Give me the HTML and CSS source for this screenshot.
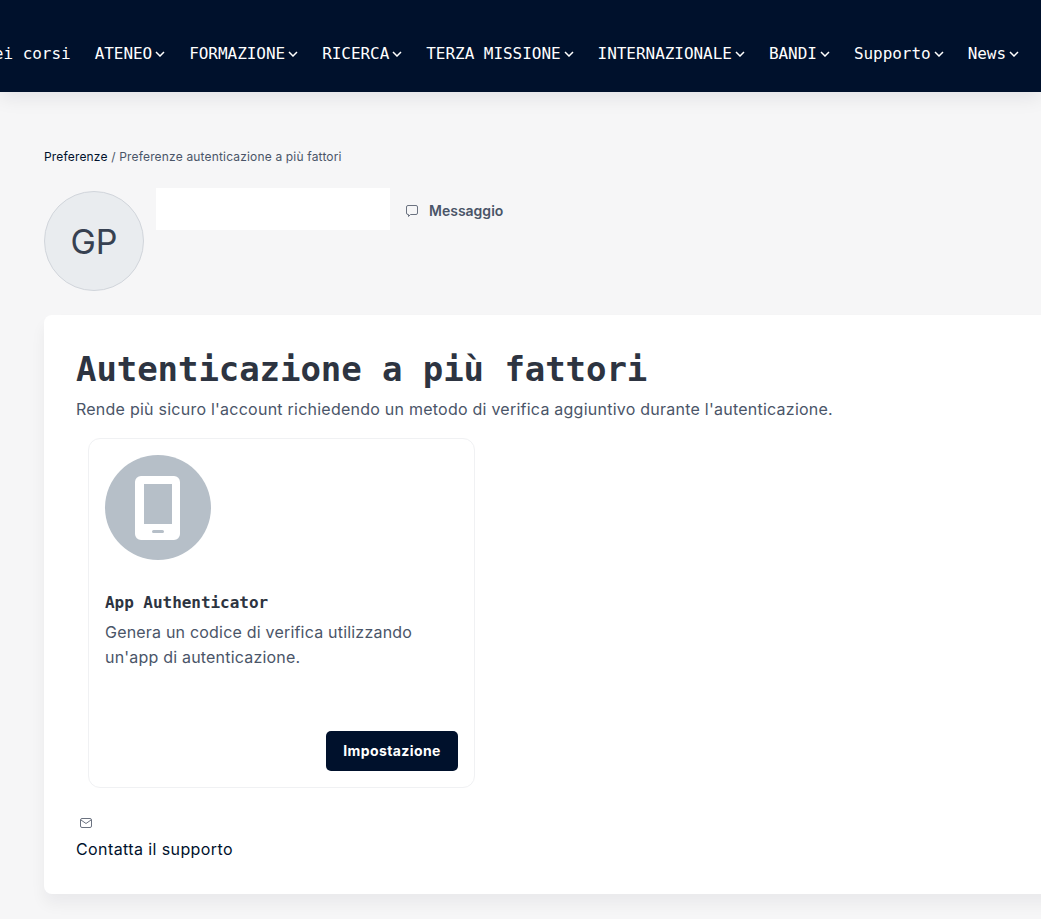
FILE: index.html
```html
<!DOCTYPE html>
<html lang="it">
<head>
  <meta charset="UTF-8" />
  <title>Autenticazione a più fattori</title>
  <link rel="stylesheet" href="styles.css">
</head>
<body>
  <nav class="topbar">
    <a class="nav-link" href="#">I miei corsi</a>
    <a class="nav-link" href="#">ATENEO<svg class="chevron" viewBox="0 0 10 6"><path d="M1 1l4 4 4-4"/></svg></a>
    <a class="nav-link" href="#">FORMAZIONE<svg class="chevron" viewBox="0 0 10 6"><path d="M1 1l4 4 4-4"/></svg></a>
    <a class="nav-link" href="#">RICERCA<svg class="chevron" viewBox="0 0 10 6"><path d="M1 1l4 4 4-4"/></svg></a>
    <a class="nav-link" href="#">TERZA MISSIONE<svg class="chevron" viewBox="0 0 10 6"><path d="M1 1l4 4 4-4"/></svg></a>
    <a class="nav-link" href="#">INTERNAZIONALE<svg class="chevron" viewBox="0 0 10 6"><path d="M1 1l4 4 4-4"/></svg></a>
    <a class="nav-link" href="#">BANDI<svg class="chevron" viewBox="0 0 10 6"><path d="M1 1l4 4 4-4"/></svg></a>
    <a class="nav-link" href="#">Supporto<svg class="chevron" viewBox="0 0 10 6"><path d="M1 1l4 4 4-4"/></svg></a>
    <a class="nav-link" href="#">News<svg class="chevron" viewBox="0 0 10 6"><path d="M1 1l4 4 4-4"/></svg></a>
  </nav>

  <main class="page">
    <p class="breadcrumb"><a href="#">Preferenze</a> <span class="sep">/</span> Preferenze autenticazione a più fattori</p>

    <div class="profile">
      <div class="avatar">GP</div>
      <div class="name-box"></div>
      <a class="message" href="#">
        <svg class="message-icon" viewBox="0 0 12 12"><path d="M2 .500h8A1.500 1.500 0 0 1 11.500 2v6A1.500 1.500 0 0 1 10 9.500H4.500L2.500 11.500V9.500H2A1.500 1.500 0 0 1 .500 8V2A1.500 1.500 0 0 1 2 .500z"/></svg>
        Messaggio
      </a>
    </div>

    <section class="panel">
      <h1>Autenticazione a più fattori</h1>
      <p class="lead">Rende più sicuro l'account richiedendo un metodo di verifica aggiuntivo durante l'autenticazione.</p>

      <div class="method">
        <div class="method-icon">
          <svg viewBox="0 0 106 105">
            <path class="phone" fill-rule="evenodd" d="M36 21h33a6 6 0 0 1 6 6v52a6 6 0 0 1-6 6H36a6 6 0 0 1-6-6V27a6 6 0 0 1 6-6zM39 29v40h28V29zM48.500 75a1.500 1.500 0 0 0 0 3h9a1.500 1.500 0 0 0 0-3z"/>
          </svg>
        </div>
        <h2>App Authenticator</h2>
        <p>Genera un codice di verifica utilizzando un'app di autenticazione.</p>
        <div class="method-actions">
          <button class="btn" type="button">Impostazione</button>
        </div>
      </div>

      <a class="support" href="#">
        <svg class="mail-icon" viewBox="0 0 12 12"><rect x="0.500" y="1.500" width="11" height="9" rx="1.500"/><path d="M1 3l5 3.500L11 3"/></svg>
        <span>Contatta il supporto</span>
      </a>
    </section>
  </main>
</body>
</html>
```

FILE: styles.css
```css
* {
  box-sizing: border-box;
  margin: 0;
  padding: 0;
}

html, body {
  height: 919px;
  overflow: hidden;
}

body {
  background: #f6f6f7;
  font-family: "Inter", sans-serif;
  color: #4a5568;
}

a {
  text-decoration: none;
  color: inherit;
}

.topbar {
  display: flex;
  justify-content: flex-end;
  align-items: center;
  gap: 24px;
  height: 92px;
  padding: 16px 22px 0 0;
  background: #00112c;
  box-shadow: 0 6px 18px rgba(0, 17, 44, 0.08);
  white-space: nowrap;
}

.nav-link {
  display: flex;
  flex-shrink: 0;
  align-items: center;
  gap: 3px;
  color: #fff;
  font-family: "DejaVu Sans Mono", monospace;
  font-size: 16px;
  letter-spacing: -0.04px;
  line-height: 20px;
}

.chevron {
  width: 10px;
  height: 6px;
  fill: none;
  stroke: #fff;
  stroke-width: 1.5;
}

.page {
  padding: 57px 0 0 44px;
}

.breadcrumb {
  font-size: 12px;
  letter-spacing: 0.17px;
  line-height: 16px;
}

.breadcrumb a {
  color: #00112c;
}

.profile {
  display: flex;
  align-items: flex-start;
  margin-top: 23px;
  height: 103px;
}

.avatar {
  display: flex;
  align-items: center;
  justify-content: center;
  flex-shrink: 0;
  width: 100px;
  height: 100px;
  margin-top: 3px;
  border: 1px solid #d1d5db;
  border-radius: 50%;
  background: #e9ecef;
  color: #374151;
  font-size: 34px;
}

.name-box {
  width: 234px;
  height: 42px;
  margin-left: 12px;
  background: #fff;
}

.message {
  display: flex;
  align-items: center;
  gap: 11px;
  margin: 14px 0 0 16px;
  font-size: 14px;
  line-height: 18px;
  font-weight: 600;
}

.message-icon, .mail-icon {
  width: 12px;
  height: 12px;
  fill: none;
  stroke: #6b7280;
  stroke-width: 1;
}

.panel {
  width: 1100px;
  height: 579px;
  margin-top: 24px;
  padding: 32px;
  background: #fff;
  border-radius: 8px;
  box-shadow: 0 10px 15px rgba(0, 17, 44, 0.05);
}

h1 {
  font-family: "DejaVu Sans Mono", monospace;
  font-size: 34px;
  letter-spacing: -0.07px;
  line-height: 44px;
  font-weight: 700;
  color: #2d3441;
}

.lead {
  margin-top: 6px;
  font-size: 16px;
  letter-spacing: 0.24px;
  line-height: 24px;
}

.method {
  display: flex;
  flex-direction: column;
  width: 387px;
  height: 350px;
  margin: 17px 0 0 12px;
  padding: 16px;
  border: 1px solid #f0f1f3;
  border-radius: 12px;
}

.method-icon svg {
  display: block;
  width: 106px;
  height: 105px;
  border-radius: 50%;
  background: #b6bfc8;
}

.phone {
  fill: #fff;
}

.method h2 {
  margin-top: 33px;
  font-family: "DejaVu Sans Mono", monospace;
  font-size: 16px;
  letter-spacing: -0.04px;
  line-height: 20px;
  font-weight: 700;
  color: #2d3441;
}

.method p {
  margin-top: 7px;
  max-width: 330px;
  font-size: 16px;
  letter-spacing: 0.2px;
  line-height: 25px;
}

.method-actions {
  display: flex;
  justify-content: flex-end;
  margin-top: auto;
}

.btn {
  width: 132px;
  height: 40px;
  padding-bottom: 2px;
  border: none;
  border-radius: 5px;
  background: #00112c;
  color: #fff;
  font-family: inherit;
  font-size: 14px;
  letter-spacing: 0.4px;
  font-weight: 700;
}

.support {
  display: block;
  margin-top: 29px;
  color: #00112c;
  font-size: 16px;
  letter-spacing: 0.4px;
  line-height: 24px;
}

.mail-icon {
  display: block;
  margin: 0 0 8px 4px;
}
```
